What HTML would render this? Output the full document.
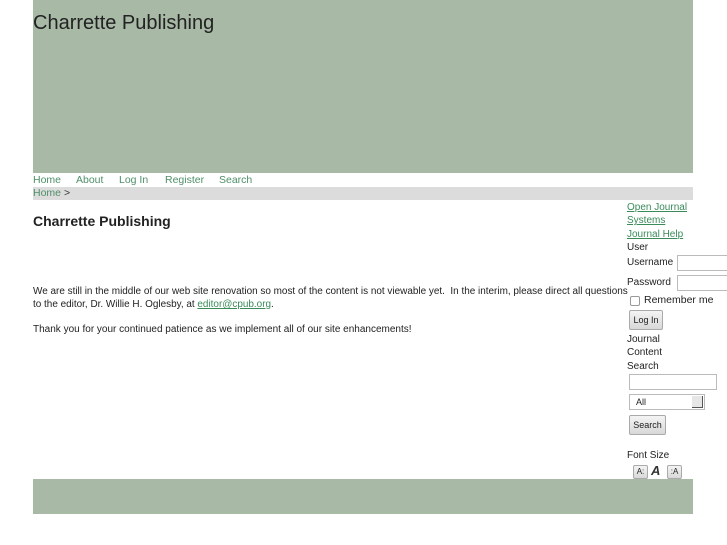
<!DOCTYPE html>
<html><head><meta charset="utf-8"><style>
body{margin:0;width:727px;height:545px;background:#fff;font-family:"Liberation Sans",sans-serif;color:#222;position:relative;overflow:hidden}
.a{position:absolute;white-space:nowrap}
a{color:#3a8a5a}
.g{color:#4e8f68}
.s{font-size:10px}
.btn{position:absolute;background:linear-gradient(#f4f4f4,#d8d8d8);border:1px solid #aaa;border-radius:2px;font-size:9px;text-align:center}
.inp{position:absolute;border:1px solid #bbb;background:#fff}
</style></head><body>
<div class="a" style="left:33px;top:0;width:660px;height:173px;background:#a8b9a6"></div>
<div class="a" style="left:33px;top:12px;font-size:20px;color:#222">Charrette Publishing</div>
<div class="a g" style="left:33px;top:174px;font-size:10.5px">Home</div>
<div class="a g" style="left:76px;top:174px;font-size:10.5px">About</div>
<div class="a g" style="left:119px;top:174px;font-size:10.5px">Log In</div>
<div class="a g" style="left:165px;top:174px;font-size:10.5px">Register</div>
<div class="a g" style="left:219px;top:174px;font-size:10.5px">Search</div>
<div class="a" style="left:33px;top:187px;width:660px;height:13px;background:#dcdcdc"></div>
<div class="a g" style="left:33px;top:187px;font-size:10.5px">Home <span style="color:#333">&gt;</span></div>
<div class="a" style="left:33px;top:213px;font-size:14px;font-weight:bold">Charrette Publishing</div>
<div class="a s" style="left:33px;top:285px;line-height:13px;font-size:9.95px">We are still in the middle of our web site renovation so most of the content is not viewable yet.&nbsp; In the interim, please direct all questions<br>to the editor, Dr. Willie H. Oglesby, at <a href="#">editor@cpub.org</a>.</div>
<div class="a s" style="left:33px;top:324px">Thank you for your continued patience as we implement all of our site enhancements!</div>
<div class="a s" style="left:627px;top:201px;line-height:13.3px"><a href="#">Open Journal</a><br><a href="#">Systems</a><br><a href="#">Journal Help</a><br>User</div>
<div class="a s" style="left:627px;top:257px">Username</div>
<div class="inp" style="left:677px;top:255px;width:52px;height:14px"></div>
<div class="a s" style="left:627px;top:277px">Password</div>
<div class="inp" style="left:677px;top:275px;width:52px;height:14px"></div>
<div class="inp" style="left:630px;top:296px;width:8px;height:8px;border-color:#999;border-radius:2px"></div>
<div class="a s" style="left:644px;top:294px;font-size:10.5px">Remember me</div>
<div class="btn" style="left:629px;top:310px;width:32px;height:18px;line-height:18px">Log In</div>
<div class="a s" style="left:627px;top:333px;line-height:13.3px">Journal<br>Content<br>Search</div>
<div class="inp" style="left:629px;top:374px;width:86px;height:14px"></div>
<div class="inp" style="left:629px;top:394px;width:74px;height:14px;font-size:9px;line-height:14px;text-indent:6px">All<div style="position:absolute;right:1px;top:1px;width:10px;height:11px;background:#e6e6e6;border-right:1px solid #555;border-bottom:1px solid #555"></div></div>
<div class="btn" style="left:629px;top:415px;width:35px;height:18px;line-height:18px">Search</div>
<div class="a s" style="left:627px;top:450px">Font Size</div>
<div class="btn" style="left:633px;top:465px;width:13px;height:12px;line-height:12px;font-size:8px">A:</div>
<div class="a" style="left:651px;top:463px;font-size:13px;font-style:italic;font-weight:bold;color:#333">A</div>
<div class="btn" style="left:667px;top:465px;width:13px;height:12px;line-height:12px;font-size:8px">:A</div>
<div class="a" style="left:33px;top:479px;width:660px;height:35px;background:#a8b9a6"></div>
</body></html>
